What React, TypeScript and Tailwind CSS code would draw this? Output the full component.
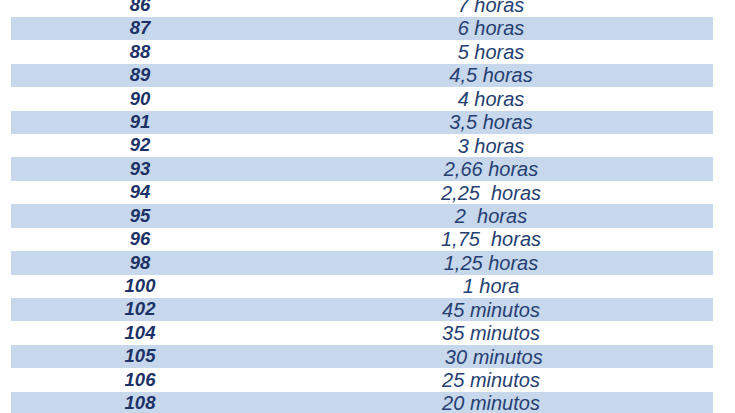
const rows: [string, string][] = [
  ['86', '7 horas'],
  ['87', '6 horas'],
  ['88', '5 horas'],
  ['89', '4,5 horas'],
  ['90', '4 horas'],
  ['91', '3,5 horas'],
  ['92', '3 horas'],
  ['93', '2,66 horas'],
  ['94', '2,25  horas'],
  ['95', '2  horas'],
  ['96', '1,75  horas'],
  ['98', '1,25 horas'],
  ['100', '1 hora'],
  ['102', '45 minutos'],
  ['104', '35 minutos'],
  ['105', ' 30 minutos'],
  ['106', '25 minutos'],
  ['108', '20 minutos'],
];

export default function App() {
  return (
    <div className="w-[735px] h-[413px] overflow-hidden bg-white font-['Liberation_Sans',Arial,sans-serif]">
      <div className="mt-[-6.7px] ml-[11px] w-[702px] flex flex-col">
        {rows.map(([temp, time], i) => (
          <div
            key={temp}
            className={`h-[23.44px] flex items-center italic leading-none text-[#1f3a6b] ${
              i % 2 === 1 ? 'bg-[#c7d7ec]' : 'bg-white'
            }`}
          >
            <div className="w-[258px] flex justify-center text-[18.5px] font-bold text-[#1c3266]">{temp}</div>
            <div className="flex-1 flex justify-center whitespace-pre text-[20px] text-[#263f72]">{time}</div>
          </div>
        ))}
      </div>
    </div>
  );
}
